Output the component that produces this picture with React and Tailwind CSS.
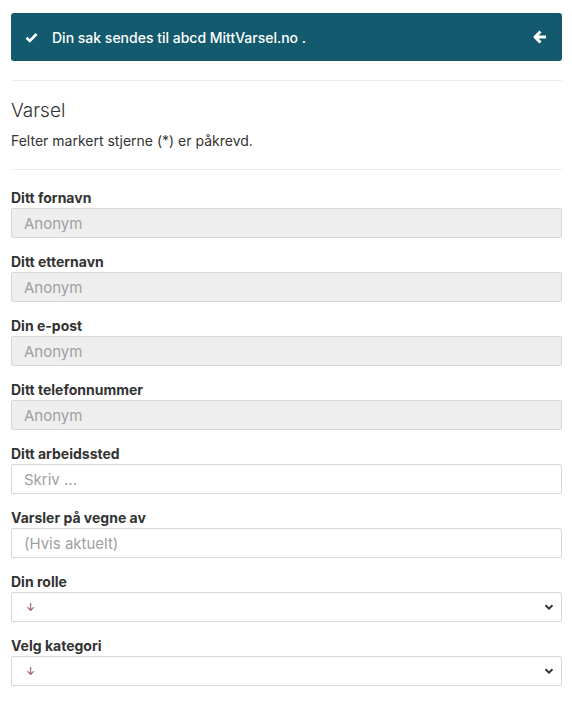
import React from "react";

function Field({ label, children }) {
  return (
    <div className="mb-4">
      <div className="text-[14px] font-bold leading-4 text-[#333] mb-[2px]">{label}</div>
      {children}
    </div>
  );
}

function TextInput({ placeholder, disabled }) {
  return (
    <input
      disabled={disabled}
      placeholder={placeholder}
      className={
        "block w-full h-[30px] px-3 text-[15px] border border-[#d5d8de] rounded-[2px] outline-none placeholder:text-[#a0a0a0] " +
        (disabled ? "bg-[#eeeeee]" : "bg-white")
      }
      style={{ fontFamily: "Inter, 'Liberation Sans', sans-serif" }}
    />
  );
}

function SelectBox() {
  return (
    <div className="flex items-center justify-between h-[30px] pl-[14px] pr-[6px] border border-[#d5d8de] rounded-[2px] bg-white">
      <span className="text-[11px] text-[#8a3f4a]">↓</span>
      <svg width="12" height="12" viewBox="0 0 12 12">
        <path d="M2.5 4.2 L6 7.6 L9.5 4.2" fill="none" stroke="#333" strokeWidth="2" />
      </svg>
    </div>
  );
}

export default function App() {
  return (
    <div
      className="w-[572px] h-[704px] bg-white pl-[11px] pr-[10px] pt-[13px] overflow-hidden"
      style={{ fontFamily: "Inter, 'Liberation Sans', sans-serif" }}
    >
      <div className="h-[48px] bg-[#135a6e] rounded-[3px] flex items-center pl-[14px] pr-[14px] text-white">
        <svg width="13" height="11" viewBox="0 0 13 11" className="mr-[14px]">
          <path d="M1.5 5.8 L4.8 9 L11.5 2" fill="none" stroke="white" strokeWidth="2.6" />
        </svg>
        <span className="text-[14px] font-medium">Din sak sendes til abcd MittVarsel.no .</span>
        <svg width="16" height="16" viewBox="0 0 16 16" className="ml-auto">
          <path d="M14 8 H3.5 M8.5 2.5 L3 8 L8.5 13.5" fill="none" stroke="white" strokeWidth="3" strokeLinejoin="round" />
        </svg>
      </div>
      <div className="mt-[19px] border-t border-[#eeeeee]" />
      <h1 className="mt-[18px] text-[19px] leading-6 font-light text-[#333]">Varsel</h1>
      <p className="mt-[10px] text-[14px] leading-4 text-[#333]">Felter markert stjerne (*) er påkrevd.</p>
      <div className="mt-[20px] border-t border-[#eeeeee]" />
      <div className="mt-[20px]">
        <Field label="Ditt fornavn"><TextInput placeholder="Anonym" disabled /></Field>
        <Field label="Ditt etternavn"><TextInput placeholder="Anonym" disabled /></Field>
        <Field label="Din e-post"><TextInput placeholder="Anonym" disabled /></Field>
        <Field label="Ditt telefonnummer"><TextInput placeholder="Anonym" disabled /></Field>
        <Field label="Ditt arbeidssted"><TextInput placeholder="Skriv ..." /></Field>
        <Field label="Varsler på vegne av"><TextInput placeholder="(Hvis aktuelt)" /></Field>
        <Field label="Din rolle"><SelectBox /></Field>
        <Field label="Velg kategori"><SelectBox /></Field>
      </div>
    </div>
  );
}
